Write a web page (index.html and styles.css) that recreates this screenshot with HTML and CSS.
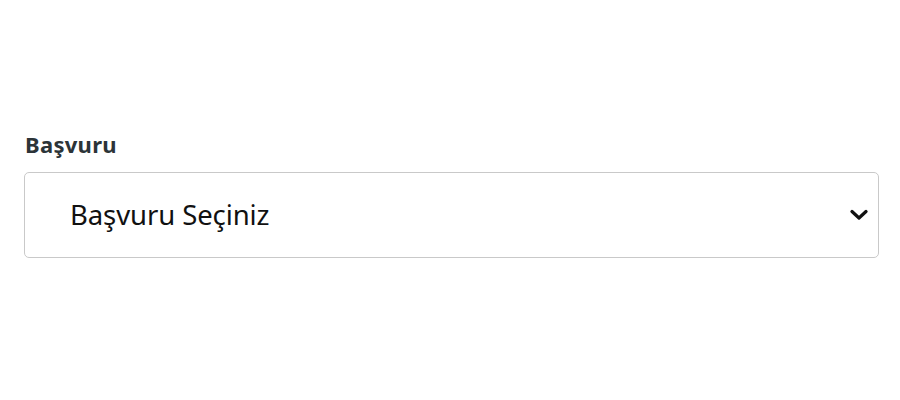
FILE: index.html
```html
<!DOCTYPE html>
<html lang="tr">
<head>
<meta charset="utf-8">
<link rel="stylesheet" href="styles.css">
</head>
<body>
<div class="field">
  <label class="field-label" for="basvuru">Başvuru</label>
  <div class="select">
    <span class="select-value">Başvuru Seçiniz</span>
    <svg class="chevron" width="18" height="12" viewBox="0 0 18 12" aria-hidden="true">
      <path d="M2 2.5 L9 9 L16 2.5" fill="none" stroke="#111" stroke-width="3.2" stroke-linecap="round" stroke-linejoin="round"/>
    </svg>
  </div>
</div>
</body>
</html>
```
FILE: styles.css
```css
html, body {
  margin: 0;
  padding: 0;
  background: #fff;
}
body {
  width: 900px;
  height: 400px;
}
.field {
  padding: 130px 21px 0 24px;
  display: flex;
  flex-direction: column;
}
.field-label {
  font-family: "Noto Sans", "Open Sans", sans-serif;
  font-weight: 700;
  font-size: 22px;
  line-height: 28px;
  letter-spacing: 0.3px;
  color: #2c3438;
  padding-left: 1px;
  margin-bottom: 14px;
}
.select {
  height: 84px;
  border: 1px solid #c9c9c9;
  border-radius: 5px;
  display: flex;
  align-items: center;
  justify-content: space-between;
  padding: 0 10px 0 45px;
  box-sizing: content-box;
}
.select-value {
  font-family: "Noto Sans", "Open Sans", sans-serif;
  font-size: 27.5px;
  color: #111;
  letter-spacing: -0.1px;
  margin-top: -2px;
}
.chevron {
  display: block;
}
```
